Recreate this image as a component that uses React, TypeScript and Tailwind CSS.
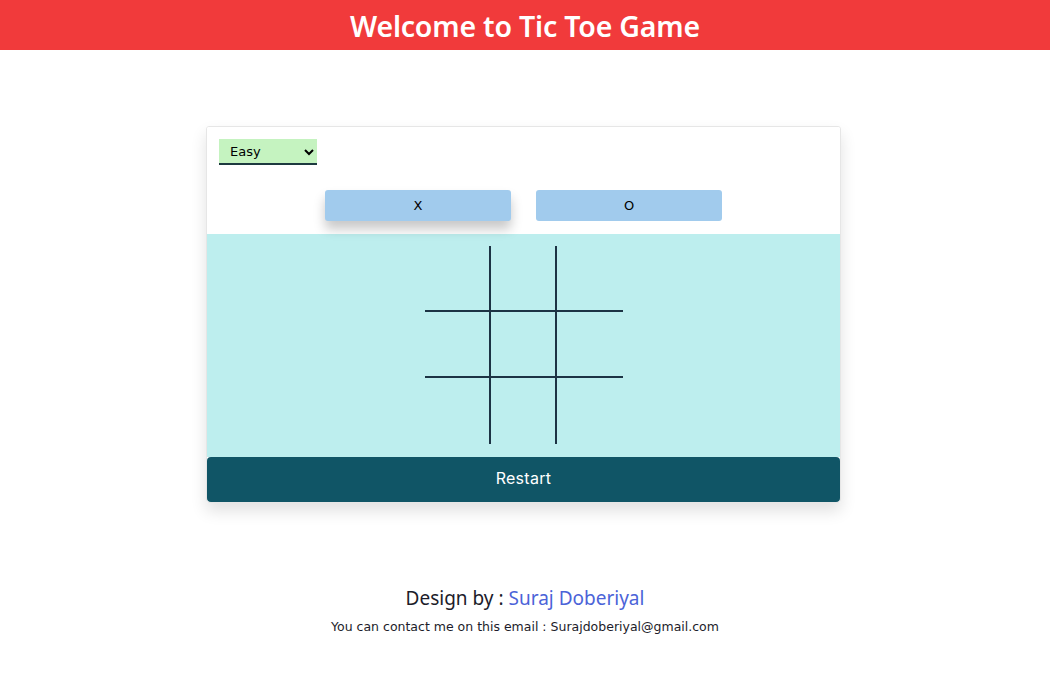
import { useState } from 'react';

const cells = Array.from({ length: 9 }, (_, i) => i);

export default function App() {
  const [level, setLevel] = useState('Easy');
  const [board, setBoard] = useState<string[]>(Array(9).fill(''));
  const [player, setPlayer] = useState('X');

  const play = (i: number) => {
    if (board[i]) return;
    setBoard(prev => prev.map((v, j) => (j === i ? player : v)));
  };

  return (
    <div className="min-h-screen bg-white font-['Noto_Sans',sans-serif]">
      <header className="h-[50px] bg-[#f13a3b] flex items-center justify-center pt-[2px]">
        <h1 className="text-white text-[28.5px] font-semibold tracking-[-0.2px] leading-none">Welcome to Tic Toe Game</h1>
      </header>

      <div className="w-[635px] ml-[calc(50%-319px)] mt-[76px] border border-[#e6e6e6] rounded-[3px] shadow-[0_8px_16px_rgba(0,0,0,0.12)] overflow-hidden">
        {/* controls */}
        <div className="bg-white px-[12px] pt-[12px] pb-[13px]">
          <select value={level} onChange={e => setLevel(e.target.value)}
            className="block w-[98px] h-[26px] bg-[#c5f3c0] border-0 border-b-2 border-[#1d3a3f] pl-[7px] text-[13px] text-black font-['DejaVu_Sans',sans-serif] outline-none">
            <option>Easy</option>
            <option>Medium</option>
            <option>Hard</option>
          </select>
          <div className="flex justify-center gap-[25px] mt-[25px]">
            <button onClick={() => setPlayer('X')} className="w-[186px] h-[31px] rounded-[3px] bg-[#a1cbed] text-[13px] text-black font-['DejaVu_Sans',sans-serif] shadow-[0_8px_12px_rgba(0,0,0,0.22)]">X</button>
            <button onClick={() => setPlayer('O')} className="w-[186px] h-[31px] rounded-[3px] bg-[#a1cbed] text-[13px] text-black font-['DejaVu_Sans',sans-serif]">O</button>
          </div>
        </div>

        {/* board */}
        <div className="bg-[#bdeeee] h-[223px] flex justify-center pt-[12px]">
          <div className="grid grid-cols-[66px_66px_66px] grid-rows-[66px_66px_66px]">
            {cells.map(i => (
              <div key={i} onClick={() => play(i)}
                className={`flex items-center justify-center text-3xl text-[#1c3344] cursor-pointer ${i % 3 !== 2 ? 'border-r-2' : ''} ${i < 6 ? 'border-b-2' : ''} border-[#1c3344]`}>
                {board[i]}
              </div>
            ))}
          </div>
        </div>

        <button onClick={() => setBoard(Array(9).fill(''))}
          className="w-full h-[45px] bg-[#105566] rounded-[4px] text-white text-[16px] font-['Inter',sans-serif] tracking-[0.3px] pb-[4px]">Restart</button>
      </div>

      <footer className="mt-[86px] text-center text-[#1c1c2a]">
        <p className="text-[19px] leading-none">Design by : <span className="text-[#4b63d8]">Suraj Doberiyal</span></p>
        <p className="mt-[10px] text-[12.5px] font-['DejaVu_Sans',sans-serif]">You can contact me on this email : Surajdoberiyal@gmail.com</p>
      </footer>
    </div>
  );
}
